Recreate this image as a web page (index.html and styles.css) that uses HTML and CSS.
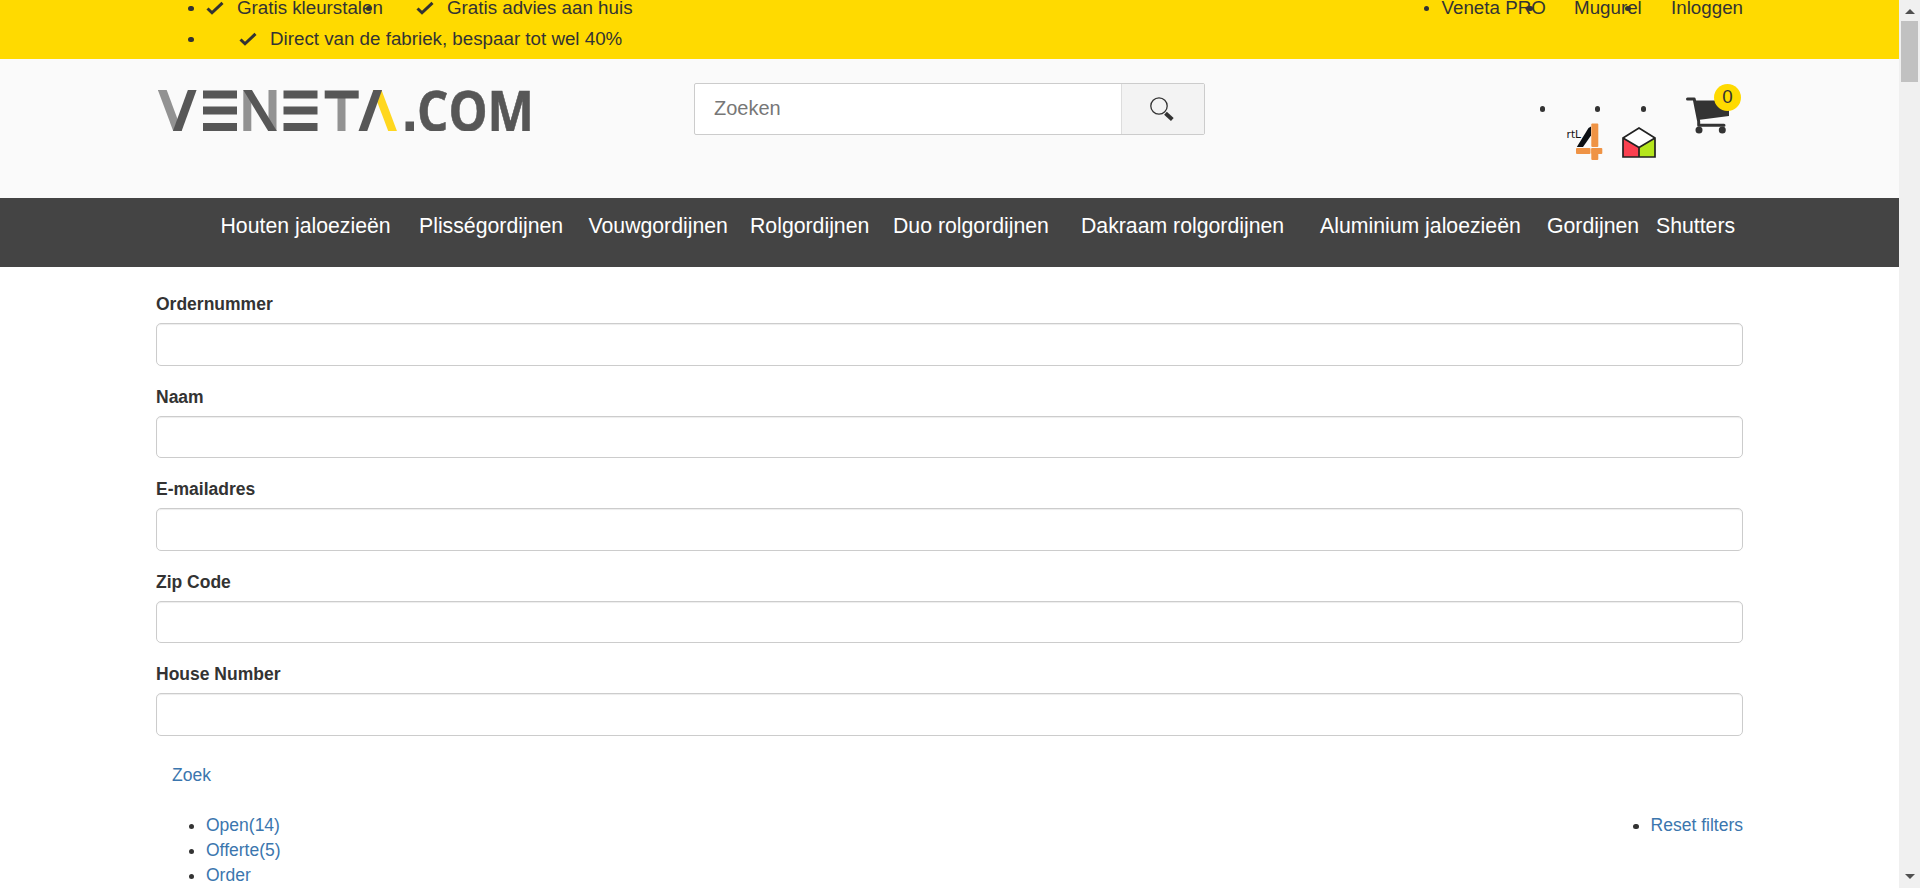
FILE: index.html
```html
<!DOCTYPE html>
<html lang="nl">
<head>
<meta charset="utf-8">
<title>Veneta.com</title>
<link rel="stylesheet" href="styles.css">
</head>
<body>
<div class="window">
<div class="page">
  <div class="topbar">
    <div class="container topbar-row">
      <ul class="usps">
        <li class="dot usp usp-first"><svg class="check" viewBox="0 0 18 14"><path d="M1.5 7.5 6 11.8 16.5 1.8"/></svg>Gratis kleurstalen</li>
        <li class="dot usp usp-second"><svg class="check" viewBox="0 0 18 14"><path d="M1.5 7.5 6 11.8 16.5 1.8"/></svg>Gratis advies aan huis</li>
        <li class="dot usp usp-third"><svg class="check" viewBox="0 0 18 14"><path d="M1.5 7.5 6 11.8 16.5 1.8"/></svg>Direct van de fabriek, bespaar tot wel 40%</li>
      </ul>
      <ul class="account">
        <li class="dot">Veneta PRO</li>
        <li class="dot">Mugurel</li>
        <li class="dot">Inloggen</li>
      </ul>
    </div>
  </div>

  <header class="header">
    <div class="container header-row">
      <svg class="logo" viewBox="0 0 376 41" role="img" aria-label="Veneta.com">
        <g stroke="#929292">
          <line x1="3.2" y1="-3" x2="20.7" y2="44" stroke-width="8.2"/>
          <line x1="89.3" y1="0" x2="89.3" y2="41" stroke-width="8"/>
          <line x1="114.5" y1="0" x2="114.5" y2="41" stroke-width="8"/>
          <line x1="183.5" y1="8" x2="183.5" y2="41" stroke-width="8"/>
        </g>
        <line x1="218" y1="-3" x2="235.7" y2="44" stroke="#ffd71f" stroke-width="8.2"/>
        <g stroke="#575757">
          <line x1="35.3" y1="-3" x2="18.2" y2="44" stroke-width="8.2"/>
          <path d="M45 4.5h34M45 20.5h34M45 37h34M125.5 4.5h34M125.5 20.5h34M125.5 37h34M166.7 4.5h34" stroke-width="8"/>
          <line x1="87.8" y1="-3" x2="116.3" y2="44" stroke-width="7.4"/>
          <line x1="220.8" y1="-3" x2="203.8" y2="44" stroke-width="8.2"/>
        </g>
        <rect x="247.5" y="31.5" width="8.5" height="9.5" fill="#575757"/>
        <text class="logo-com" x="259" y="40.5" textLength="117" lengthAdjust="spacingAndGlyphs">COM</text>
      </svg>

      <div class="search">
        <div class="search-field">Zoeken</div>
        <div class="search-button">
          <svg class="search-icon" viewBox="0 0 24 24"><circle cx="9" cy="9" r="8.2" fill="none" stroke="#333" stroke-width="1.3"/><path d="M15.5 16.2 22.3 22.5" stroke="#333" stroke-width="4"/></svg>
        </div>
      </div>

      <ul class="badges">
        <li class="dot"></li>
        <li class="dot">
          <svg class="rtl4" viewBox="0 0 36 38">
            <path d="M9.8 24 21.5 5 24 3.500V12.500L16 24Z" fill="#0b0f14"/>
            <rect x="24.3" y="0.500" width="7" height="23.500" rx="1" fill="#ef9345"/>
            <rect x="9" y="25" width="14.5" height="6" rx="1" fill="#ef9345"/>
            <rect x="24.3" y="25" width="7" height="12" rx="1" fill="#ef9345"/>
            <rect x="24.3" y="25" width="11" height="6" rx="1" fill="#ef9345"/>
            <text class="rtl-text" x="-0.5" y="15" textLength="14.5" lengthAdjust="spacingAndGlyphs">rtL</text>
          </svg>
        </li>
        <li class="dot">
          <svg class="house" viewBox="0 0 34 31">
            <path d="M1 11 17 20.5V30H1Z" fill="#fb4050"/>
            <path d="M33 11 17 20.5V30H33Z" fill="#b5e61d"/>
            <path d="M1 11 17 1 33 11 17 20.5Z" fill="#fff"/>
            <path d="M1 11 17 1 33 11V30H1ZM1 11 17 20.5 33 11M17 20.5V30" fill="none" stroke="#222" stroke-width="1.7"/>
          </svg>
        </li>
      </ul>

      <div class="cart">
        <svg class="cart-icon" viewBox="0 0 44 37">
          <path d="M1.5 2H8.200L12.700 24.500V28.300H38" fill="none" stroke="#333" stroke-width="3" stroke-linecap="round" stroke-linejoin="round"/>
          <path d="M8 3.500H43V19L12 23Z" fill="#333"/>
          <circle cx="13" cy="33" r="3.500" fill="#333"/><circle cx="36.300" cy="33" r="3.500" fill="#333"/>
        </svg>
        <span class="cart-count">0</span>
      </div>
    </div>
  </header>

  <nav class="nav">
    <div class="container nav-row">
      <a>Houten jaloezieën</a><a>Plisségordijnen</a><a>Vouwgordijnen</a><a>Rolgordijnen</a><a>Duo rolgordijnen</a><a>Dakraam rolgordijnen</a><a>Aluminium jaloezieën</a><a>Gordijnen</a><a>Shutters</a>
    </div>
  </nav>

  <main class="container main">
    <div class="group"><label for="f1">Ordernummer</label><input id="f1" class="field"></div>
    <div class="group"><label for="f2">Naam</label><input id="f2" class="field"></div>
    <div class="group"><label for="f3">E-mailadres</label><input id="f3" class="field"></div>
    <div class="group"><label for="f4">Zip Code</label><input id="f4" class="field"></div>
    <div class="group"><label for="f5">House Number</label><input id="f5" class="field"></div>
    <a class="submit">Zoek</a>
    <div class="filters">
      <ul class="filter-list">
        <li class="dot"><a>Open(14)</a></li>
        <li class="dot"><a>Offerte(5)</a></li>
        <li class="dot"><a>Order</a></li>
      </ul>
      <ul class="filter-list"><li class="dot"><a>Reset filters</a></li></ul>
    </div>
  </main>
</div>
<div class="scrollbar">
  <div class="arrow arrow-up"></div>
  <div class="thumb"></div>
  <div class="arrow arrow-down"></div>
</div>
</div>
</body>
</html>
```
FILE: styles.css
```css
* { box-sizing: border-box; }
body {
  margin: 0;
  overflow: hidden;
  font: 17.5px/25px "Liberation Sans", Arial, sans-serif;
  color: #333;
  background: #fff;
}
ul { margin: 0; padding: 0; list-style: none; }
svg { display: block; }
.window { display: flex; height: 888px; overflow: hidden; }
.page { flex: 1; min-width: 0; }
.container { width: 1587px; margin-left: 156px; }

.dot { position: relative; }
.dot::before {
  content: "";
  position: absolute;
  left: -18px;
  top: 50%;
  width: 5.5px;
  height: 5.5px;
  margin-top: -2px;
  border-radius: 50%;
  background: #333;
}

.topbar { height: 59px; background: #ffda00; font-size: 18.75px; line-height: 31px; overflow: hidden; }
.topbar-row { display: flex; align-items: flex-start; justify-content: space-between; margin-top: -8px; }
.usps { display: grid; grid-template-columns: 178px auto; padding-left: 50px; }
.usp { display: flex; align-items: center; padding-left: 32px; white-space: nowrap; }
.usp-first { padding-left: 0; }
.usp-third { grid-column: 1 / 3; padding-left: 33px; }
.check { width: 18px; height: 14px; margin-right: 13px; fill: none; stroke: #333; stroke-width: 3; }
.account { display: grid; grid-template-columns: 132.5px 97px auto; }
.account .dot:nth-child(2)::before { left: -47px; }
.account .dot:nth-child(3)::before { left: -46px; }

.header { height: 139px; background: #fafafa; }
.header-row { display: flex; align-items: flex-start; }
.logo { width: 376px; height: 41px; margin: 30.5px 0 0 2px; }
.logo-com { font: bold 56px "Open Sans", sans-serif; fill: #575757; stroke: #575757; stroke-width: .6px; }
.search {
  display: flex;
  width: 511px;
  height: 52px;
  margin: 24px 0 0 160px;
  border: 1px solid #ccc;
  border-radius: 2px;
  background: #fff;
}
.search-field { flex: 1; padding-left: 19px; font-size: 20px; line-height: 48px; color: #777; }
.search-button { width: 83px; padding: 13px 0 0 28px; background: #f3f3f3; border-left: 1px solid #ddd; }
.search-icon { width: 24px; height: 24px; }
.badges { display: grid; grid-template-columns: 55px 46px 40px; height: 101px; margin: 0 0 0 353px; }
.badges .dot::before { left: -18.5px; top: 49px; }
.rtl4 { width: 36px; height: 38px; margin: 64px 0 0 -46px; overflow: visible; }
.rtl-text { font: 10px "DejaVu Sans", sans-serif; fill: #111; }
.house { width: 34px; height: 31px; margin: 67.5px 0 0 -37px; }
.cart { position: relative; width: 57px; margin: 37.5px 0 0 -13px; }
.cart-icon { width: 44px; height: 37px; }
.cart-count {
  position: absolute;
  left: 28px;
  top: -13px;
  width: 27px;
  height: 27px;
  border-radius: 50%;
  background: #ffda00;
  font-size: 18.75px;
  line-height: 26px;
  text-align: center;
}

.nav { height: 69px; background: #444; }
.nav-row {
  display: grid;
  grid-template-columns: 198.5px 169.5px 161.500px 143px 188px 239px 227px 109px auto;
  padding: 13px 0 0 64.5px;
  font-size: 21.25px;
  line-height: 30px;
  color: #fff;
  white-space: nowrap;
}

.main { padding-top: 25px; }
.group { height: 92.5px; }
.group label { display: block; margin-bottom: 6.25px; font-weight: bold; }
.field {
  display: block;
  width: 100%;
  height: 42.5px;
  border: 1px solid #ccc;
  border-radius: 5px;
  box-shadow: inset 0 1px 1px rgba(0, 0, 0, .075);
  background: #fff;
}
a { color: inherit; }
.submit { display: block; padding: 8.5px 16px; color: #3b76ae; }
.filters { display: flex; justify-content: space-between; padding: 16px 0 0 50px; }
.filter-list a { color: #3b76ae; }
.filters .dot::before { top: 11px; left: -17.5px; margin-top: 0; }

.scrollbar {
  display: flex;
  flex-direction: column;
  align-items: center;
  width: 21px;
  padding: 9px 0;
  background: #f0f0f0;
}
.thumb { width: 17px; height: 61px; margin-top: 7px; background: #c1c1c1; }
.arrow { border: 5px solid transparent; }
.arrow-up { height: 5px; border-top: 0; border-bottom-color: #505050; }
.arrow-down { height: 5px; margin-top: auto; border-bottom: 0; border-top-color: #505050; }
```
